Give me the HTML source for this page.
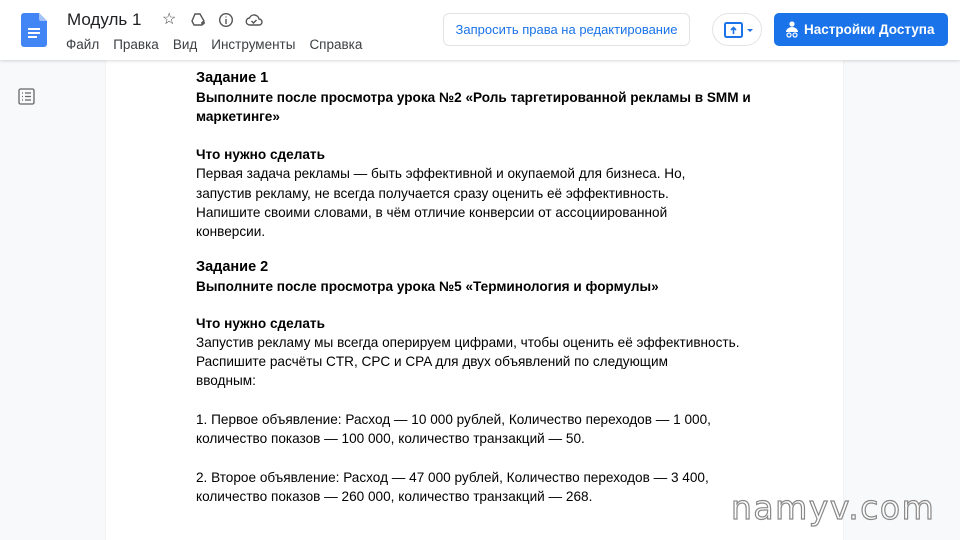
<!DOCTYPE html>
<html><head><meta charset="utf-8"><style>
*{margin:0;padding:0;box-sizing:border-box}
body{width:960px;height:540px;overflow:hidden;background:#f8f9fa;font-family:"Liberation Sans",Arial,sans-serif;position:relative}
.hdr{position:absolute;left:0;top:0;width:960px;height:60px;background:#fff;box-shadow:0 1px 3px rgba(60,64,67,.2);z-index:2}
.page{position:absolute;left:106px;top:60px;width:737px;height:480px;background:#fff;box-shadow:0 0 1px rgba(0,0,0,.15)}
.t{position:absolute;left:196px;font-size:13.6px;color:#000;white-space:nowrap;line-height:20px}
.b{font-weight:bold}
.menu span{margin-right:14px}
</style></head><body>
<div class="hdr">
 <svg style="position:absolute;left:21px;top:13px" width="26" height="34" viewBox="0 0 26 34"><path d="M3 0h15l8 8v23a3 3 0 0 1-3 3H3a3 3 0 0 1-3-3V3a3 3 0 0 1 3-3z" fill="#4285f4"/><path d="M18 0v6a2 2 0 0 0 2 2h6z" fill="#a1c2fa"/><rect x="7" y="15" width="12" height="2" fill="#fff"/><rect x="7" y="19" width="12" height="2" fill="#fff"/><rect x="7" y="23" width="9" height="2" fill="#fff"/></svg>
 <div style="position:absolute;left:67px;top:10px;font-size:17px;color:#202124">Модуль 1</div>
 <div style="position:absolute;left:162px;top:9px;font-size:16px;color:#444">☆</div>
 <svg style="position:absolute;left:190px;top:12px" width="16" height="16" viewBox="0 0 16 16" fill="none" stroke="#555" stroke-width="1.4"><path d="M5 2h5l4 7-2 4H4L2 9z"/><path d="M11 11h4M13 9v4"/></svg>
 <svg style="position:absolute;left:218px;top:12px" width="16" height="16" viewBox="0 0 16 16" fill="none" stroke="#555" stroke-width="1.4"><circle cx="8" cy="8" r="6.3"/><path d="M8 7v5M8 4.5v1"/></svg>
 <svg style="position:absolute;left:245px;top:12px" width="18" height="16" viewBox="0 0 18 16" fill="none" stroke="#555" stroke-width="1.4"><path d="M5 13h9a3 3 0 0 0 0-6 5 5 0 0 0-9.5-1A3.5 3.5 0 0 0 5 13z"/><path d="M6.5 9l2 2 3-3"/></svg>
 <div class="menu" style="position:absolute;left:66px;top:37px;font-size:13.5px;color:#3c4043"><span>Файл</span><span>Правка</span><span>Вид</span><span>Инструменты</span><span>Справка</span></div>
 <div style="position:absolute;left:443px;top:13px;width:247px;height:33px;border:1px solid #e3e3e3;border-radius:6px;color:#1a73e8;font-size:13px;line-height:31px;text-align:center">Запросить права на редактирование</div>
 <div style="position:absolute;left:712px;top:13px;width:50px;height:33px;border:1px solid #e3e3e3;border-radius:17px"><svg style="position:absolute;left:11px;top:8px" width="30" height="16" viewBox="0 0 30 16"><rect x="1" y="1" width="17" height="14" rx="1.5" fill="none" stroke="#1a73e8" stroke-width="2"/><path d="M9.5 12V6M7 8l2.5-2.5L12 8" stroke="#1a73e8" stroke-width="1.6" fill="none"/><path d="M23 7h6l-3 3z" fill="#1a73e8"/></svg></div>
 <div style="position:absolute;left:774px;top:13px;width:174px;height:33px;background:#1a73e8;border-radius:5px;color:#fff;font-size:13.5px;font-weight:bold;line-height:33px;padding-left:30px">Настройки Доступа</div>
 <svg style="position:absolute;left:785px;top:21px" width="14" height="17" viewBox="0 0 14 17" fill="#fff"><circle cx="7" cy="3" r="2.6"/><path d="M1 11a6 5 0 0 1 12 0z"/><circle cx="4" cy="14" r="2" fill="none" stroke="#fff" stroke-width="1.2"/><circle cx="10" cy="14" r="2" fill="none" stroke="#fff" stroke-width="1.2"/></svg>
</div>
<svg style="position:absolute;left:18px;top:88px" width="17" height="17" viewBox="0 0 17 17" fill="none" stroke="#666" stroke-width="1.3"><rect x="1" y="1" width="15" height="15" rx="1.5"/><path d="M4 5h1M7 5h6M4 8.5h1M7 8.5h6M4 12h1M7 12h6"/></svg>
<div class="page"></div>
<div class="t b" style="top:68px;font-size:14.5px">Задание 1</div>
<div class="t b" style="top:88px;font-size:13.6px">Выполните после просмотра урока №2 «Роль таргетированной рекламы в SMM и</div>
<div class="t b" style="top:107px;font-size:13.6px">маркетинге»</div>
<div class="t b" style="top:145px">Что нужно сделать</div>
<div class="t" style="top:164px">Первая задача рекламы — быть эффективной и окупаемой для бизнеса. Но,</div>
<div class="t" style="top:184px">запустив рекламу, не всегда получается сразу оценить её эффективность.</div>
<div class="t" style="top:203px">Напишите своими словами, в чём отличие конверсии от ассоциированной</div>
<div class="t" style="top:222px">конверсии.</div>
<div class="t b" style="top:257px;font-size:14.5px">Задание 2</div>
<div class="t b" style="top:277px;font-size:13.6px">Выполните после просмотра урока №5 «Терминология и формулы»</div>
<div class="t b" style="top:314px">Что нужно сделать</div>
<div class="t" style="top:333px">Запустив рекламу мы всегда оперируем цифрами, чтобы оценить её эффективность.</div>
<div class="t" style="top:352px">Распишите расчёты CTR, CPC и CPA для двух объявлений по следующим</div>
<div class="t" style="top:371px">вводным:</div>
<div class="t" style="top:410px">1. Первое объявление: Расход — 10 000 рублей, Количество переходов — 1 000,</div>
<div class="t" style="top:429px">количество показов — 100 000, количество транзакций — 50.</div>
<div class="t" style="top:468px">2. Второе объявление: Расход — 47 000 рублей, Количество переходов — 3 400,</div>
<div class="t" style="top:487px">количество показов — 260 000, количество транзакций — 268.</div>
<div style="position:absolute;left:731px;top:488px;font-size:33px;color:#fff;-webkit-text-stroke:1.2px #888;letter-spacing:1.5px;font-family:'DejaVu Sans',sans-serif">namyv.com</div>
</body></html>
